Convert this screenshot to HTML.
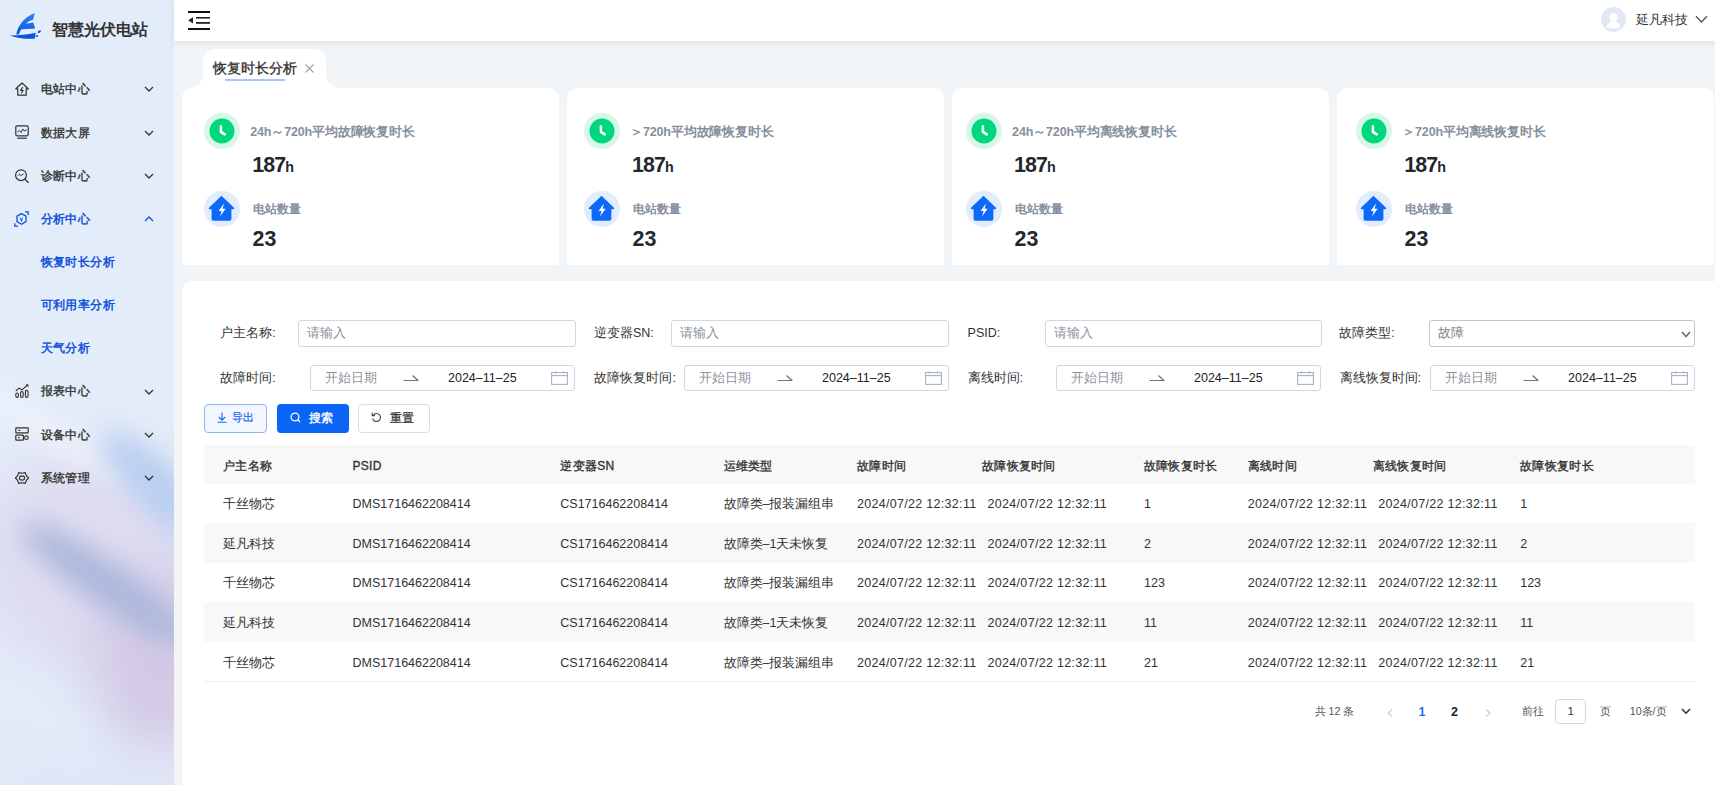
<!DOCTYPE html>
<html><head><meta charset="utf-8">
<style>
*{margin:0;padding:0;box-sizing:border-box}
html,body{width:1715px;height:785px;overflow:hidden}
body{font-family:"Liberation Sans",sans-serif;background:#f1f5f8;color:#333;position:relative}
.a{position:absolute;white-space:nowrap}
#side{position:absolute;left:0;top:0;width:174px;height:785px;background:#e3ecf9;overflow:hidden}
#side svg.bg{position:absolute;left:0;top:0}
.mi{position:absolute;left:40.7px;font-size:12px;letter-spacing:0.4px;color:#333;line-height:16px;white-space:nowrap;-webkit-text-stroke:0.35px currentColor}
.sub{color:#0c4fdc;-webkit-text-stroke:0.45px currentColor}
.chev{position:absolute;left:144px}
#hdr{position:absolute;left:174px;top:0;width:1541px;height:41px;background:#fff;box-shadow:0 2px 8px rgba(0,21,41,.09)}
#tab{position:absolute;left:202.5px;top:48.7px;width:123px;height:39.3px;background:#fff;border-radius:12px 12px 0 0}
#tab:before,#tab:after{content:"";position:absolute;bottom:0;width:13px;height:13px}
#tab:before{left:-13px;background:radial-gradient(circle at 0 0,transparent 12.5px,#fff 13px)}
#tab:after{right:-13px;background:radial-gradient(circle at 100% 0,transparent 12.5px,#fff 13px)}
.card{position:absolute;top:88px;width:377px;height:177px;background:#fff;border-radius:10px 10px 0 0}
.ico{position:absolute}
.lbl{position:absolute;font-size:12.5px;letter-spacing:-0.15px;font-weight:bold;color:#86909c;line-height:16px;white-space:nowrap}
.val{position:absolute;font-size:21.4px;font-weight:bold;color:#23272e;line-height:24px;letter-spacing:-0.9px;white-space:nowrap}
.val small{font-size:14.3px;letter-spacing:0}
#panel{position:absolute;left:182px;top:281px;width:1540px;height:520px;background:#fff;border-radius:10px}
.fl{position:absolute;font-size:12.5px;color:#333;line-height:16px;white-space:nowrap}
.inp{position:absolute;height:28px;border:1px solid #d2d7df;border-radius:3px;background:#fff}
.ph{position:absolute;font-size:12.5px;color:#8d939c;line-height:16px;white-space:nowrap}
.dt{position:absolute;font-size:12.5px;color:#222;line-height:16px;white-space:nowrap}
.btn{position:absolute;top:404.3px;height:28.3px;border-radius:4px}
.th{position:absolute;top:445px;left:204px;width:1491px;height:39px;background:#f8f8f8}
.tr{position:absolute;left:204px;width:1491px}
.tc{position:absolute;font-size:12.5px;color:#333;line-height:16px;white-space:nowrap}
.tcd{letter-spacing:0.3px}
.hc{position:absolute;font-size:12px;letter-spacing:0.3px;color:#333;line-height:16px;white-space:nowrap;-webkit-text-stroke:0.35px currentColor}
.pg{position:absolute;font-size:10.7px;color:#555;line-height:14px;white-space:nowrap}
</style></head><body>
<div id="side">
<svg class="bg" width="174" height="785" viewBox="0 0 174 785">
<defs>
<filter id="bl1" x="-100%" y="-100%" width="300%" height="300%"><feGaussianBlur stdDeviation="13"/></filter>
<filter id="bl2" x="-100%" y="-100%" width="300%" height="300%"><feGaussianBlur stdDeviation="28"/></filter>
</defs>
<rect x="0" y="0" width="174" height="785" fill="#e3ecf9"/>
<g filter="url(#bl2)"><ellipse cx="90" cy="560" rx="120" ry="110" fill="#dedcf0"/></g>
<g filter="url(#bl2)"><ellipse cx="160" cy="665" rx="70" ry="95" fill="#d3c9e5"/></g>
<g filter="url(#bl1)"><ellipse cx="40" cy="425" rx="120" ry="12" transform="rotate(30 40 425)" fill="#eef2fb"/></g>
<g filter="url(#bl1)"><ellipse cx="160" cy="490" rx="78" ry="24" transform="rotate(45 160 490)" fill="#b9cff0"/></g>
<g filter="url(#bl1)"><ellipse cx="108" cy="585" rx="104" ry="22" transform="rotate(35 108 585)" fill="#adb8dc"/></g>
<g filter="url(#bl2)"><ellipse cx="10" cy="770" rx="80" ry="70" fill="#e1ebf8"/></g>
<g filter="url(#bl2)"><ellipse cx="110" cy="800" rx="110" ry="35" fill="#dfe4f5"/></g>
</svg>
<svg class="a" style="left:8px;top:10px" width="36" height="32" viewBox="0 0 36 32">
<defs><linearGradient id="lg" x1="0" y1="0" x2="0" y2="1"><stop offset="0" stop-color="#2a86f2"/><stop offset="1" stop-color="#0a55e2"/></linearGradient></defs>
<path fill="url(#lg)" d="M26.9,3 C17.5,6.5 10.5,14 8.2,24.2 L10.9,24.6 C11.6,22.3 12.4,20.6 13.6,19.2 L27.2,18.6 L25.2,12.6 L18,13.8 C20.2,11.4 22.8,10.2 25.0,9.8 Z"/>
<path fill="#0a55e2" d="M2,25.4 C10,25.4 20,24.6 27.6,22.8 L27,28.6 C18,29.2 9,28.2 2,25.4 Z"/>
<ellipse cx="31.3" cy="21.6" rx="1.8" ry="1.1" transform="rotate(-35 31.3 21.6)" fill="#0a55e2"/>
<ellipse cx="29" cy="26" rx="1.3" ry="0.9" transform="rotate(-25 29 26)" fill="#0a55e2"/>
</svg>
<div class="a" style="left:51.5px;top:19px;font-size:16.1px;font-weight:bold;color:#333;line-height:20px">智慧光伏电站</div>
</div>
<div class="mi" style="top:81.0px">电站中心</div>
<svg class="a" style="left:15px;top:81.8px" width="14" height="14" viewBox="0 0 14 14"><path d="M7 1 L13.2 6.8 L11.2 6.8 L11.2 13.2 L2.8 13.2 L2.8 6.8 L0.8 6.8 Z" fill="none" stroke="#333" stroke-width="1.2" stroke-linejoin="round"/><path d="M7.8 5 L5.6 8.4 L8.2 8.4 L6.2 11.2" fill="none" stroke="#333" stroke-width="1.1" stroke-linejoin="round"/></svg>
<svg class="a chev" style="top:86.3px" width="10" height="6" viewBox="0 0 10 6"><path d="M1 1 L5 5 L9 1" fill="none" stroke="#333" stroke-width="1.3"/></svg>
<div class="mi" style="top:124.6px">数据大屏</div>
<svg class="a" style="left:15px;top:125.4px" width="14" height="14" viewBox="0 0 14 14"><rect x="0.8" y="0.8" width="12.4" height="10" rx="1.2" fill="none" stroke="#333" stroke-width="1.2"/><path d="M2.5 7 L4.5 5.5 L6 7.5 L8 4 L9.5 6 L11.5 5" fill="none" stroke="#333" stroke-width="1"/><path d="M2.2 13.2 H11.8" stroke="#333" stroke-width="1.2"/></svg>
<svg class="a chev" style="top:129.9px" width="10" height="6" viewBox="0 0 10 6"><path d="M1 1 L5 5 L9 1" fill="none" stroke="#333" stroke-width="1.3"/></svg>
<div class="mi" style="top:167.7px">诊断中心</div>
<svg class="a" style="left:15px;top:168.5px" width="14" height="14" viewBox="0 0 14 14"><circle cx="6" cy="6.2" r="5.4" fill="none" stroke="#333" stroke-width="1.2"/><path d="M3 6.8 L4.5 5.2 L6.2 6.6 L8.6 4.8" fill="none" stroke="#333" stroke-width="1"/><path d="M10 10.2 L13.4 13.6" stroke="#333" stroke-width="1.3" stroke-linecap="round"/></svg>
<svg class="a chev" style="top:173.0px" width="10" height="6" viewBox="0 0 10 6"><path d="M1 1 L5 5 L9 1" fill="none" stroke="#333" stroke-width="1.3"/></svg>
<div class="mi sub" style="top:210.9px">分析中心</div>
<svg class="a" style="left:14px;top:210.7px" width="16" height="16" viewBox="0 0 16 16"><path d="M7.5 2.6 L12 5.2 L12 10.6 L7.5 13.2 L3 10.6 L3 5.2 Z" fill="none" stroke="#0c4fdc" stroke-width="1.3"/><path d="M6 6.8 L7.5 8.2 L9 6.8 M7.5 8.2 V10.4 M6.3 9 H8.7" fill="none" stroke="#0c4fdc" stroke-width="1"/><path d="M11 0.8 H14.2 V4" fill="none" stroke="#0c4fdc" stroke-width="1.3"/><path d="M0.8 12.2 V15.2 H4" fill="none" stroke="#0c4fdc" stroke-width="1.3"/></svg>
<svg class="a chev" style="top:215.7px" width="10" height="6" viewBox="0 0 10 6"><path d="M1 5 L5 1 L9 5" fill="none" stroke="#0c4fdc" stroke-width="1.3"/></svg>
<div class="mi sub" style="top:254.0px">恢复时长分析</div>
<div class="mi sub" style="top:297.1px">可利用率分析</div>
<div class="mi sub" style="top:340.3px">天气分析</div>
<div class="mi" style="top:383.4px">报表中心</div>
<svg class="a" style="left:15px;top:384.2px" width="14" height="14" viewBox="0 0 14 14"><path d="M0.8 7 L4 4.2 L7 5.8 L12.6 1" fill="none" stroke="#333" stroke-width="1.1"/><path d="M11 0.8 H13 V2.8" fill="none" stroke="#333" stroke-width="1"/><rect x="0.8" y="9" width="2.6" height="4.4" rx="1.3" fill="none" stroke="#333" stroke-width="1.1"/><rect x="5.6" y="7.6" width="2.6" height="5.8" rx="1.3" fill="none" stroke="#333" stroke-width="1.1"/><rect x="10.4" y="6.4" width="2.6" height="7" rx="1.3" fill="none" stroke="#333" stroke-width="1.1"/></svg>
<svg class="a chev" style="top:388.7px" width="10" height="6" viewBox="0 0 10 6"><path d="M1 1 L5 5 L9 1" fill="none" stroke="#333" stroke-width="1.3"/></svg>
<div class="mi" style="top:426.6px">设备中心</div>
<svg class="a" style="left:15px;top:427.4px" width="14" height="14" viewBox="0 0 14 14"><rect x="0.8" y="0.8" width="12.4" height="5" rx="0.6" fill="none" stroke="#333" stroke-width="1.2"/><rect x="0.8" y="8.2" width="7.6" height="5" rx="0.6" fill="none" stroke="#333" stroke-width="1.2"/><circle cx="11.4" cy="10.7" r="1.8" fill="none" stroke="#333" stroke-width="1.1"/><path d="M3 3.3 H5.5 M3 10.7 H5" stroke="#333" stroke-width="1"/></svg>
<svg class="a chev" style="top:431.9px" width="10" height="6" viewBox="0 0 10 6"><path d="M1 1 L5 5 L9 1" fill="none" stroke="#333" stroke-width="1.3"/></svg>
<div class="mi" style="top:469.8px">系统管理</div>
<svg class="a" style="left:15px;top:470.6px" width="14" height="14" viewBox="0 0 14 14"><path d="M7.00 2.25 L10.30 1.57 L11.33 4.62 L13.60 7.00 L11.33 9.38 L10.30 12.43 L7.00 11.75 L3.70 12.43 L2.67 9.38 L0.40 7.00 L2.67 4.62 L3.70 1.57 Z" fill="none" stroke="#333" stroke-width="1.2" stroke-linejoin="round"/><ellipse cx="7" cy="7" rx="2.6" ry="2.1" fill="none" stroke="#333" stroke-width="1.1"/></svg>
<svg class="a chev" style="top:475.1px" width="10" height="6" viewBox="0 0 10 6"><path d="M1 1 L5 5 L9 1" fill="none" stroke="#333" stroke-width="1.3"/></svg>
<div id="hdr"></div>
<svg class="a" style="left:188px;top:11px" width="23" height="20" viewBox="0 0 23 20"><rect x="0" y="0" width="22" height="2" fill="#111"/><rect x="8" y="6" width="14" height="1.6" fill="#222"/><rect x="8" y="11" width="14" height="1.8" fill="#222"/><rect x="0" y="17" width="22" height="2" fill="#111"/><path d="M5 6.2 L0.2 9.3 L5 12.6 Z" fill="#222"/></svg>
<svg class="a" style="left:1601px;top:7px" width="25" height="25" viewBox="0 0 25 25"><circle cx="12.5" cy="12.5" r="12.5" fill="#e1e8f3"/><circle cx="12.5" cy="10.2" r="4.2" fill="#fff"/><path d="M5.5 20.2 C6.5 16 9 14.6 12.5 14.6 C16 14.6 18.5 16 19.5 20.2 C17 21.6 8 21.6 5.5 20.2 Z" fill="#fff"/></svg>
<div class="a" style="left:1635.5px;top:11.5px;font-size:12.8px;color:#333;line-height:16px">延凡科技</div>
<svg class="a" style="left:1695px;top:15px" width="13" height="9" viewBox="0 0 13 9"><path d="M1 1.2 L6.5 7 L12 1.2" fill="none" stroke="#555" stroke-width="1.4"/></svg>
<div id="tab"></div>
<div class="a" style="left:213px;top:58.5px;font-size:14.3px;color:#333;line-height:18px;-webkit-text-stroke:0.35px #333">恢复时长分析</div>
<svg class="a" style="left:305px;top:64px" width="9" height="9" viewBox="0 0 9 9"><path d="M0.5 0.5 L8.5 8.5 M8.5 0.5 L0.5 8.5" stroke="#9aa3b2" stroke-width="1.1"/></svg>
<div class="a" style="left:225px;top:79px;width:60px;height:2px;border-radius:1px;background:#a6c8f8"></div>
<div class="card" style="left:182px"></div>
<svg class="ico" style="left:204.2px;top:113px" width="36" height="36" viewBox="0 0 36 36"><circle cx="18" cy="18" r="18" fill="#d6f7e9"/><circle cx="18" cy="18" r="12.5" fill="#00d67b"/><path d="M16.9 13.2 V18.9 L20.8 21.4" fill="none" stroke="#fff" stroke-width="2.5" stroke-linecap="round" stroke-linejoin="round"/></svg>
<svg class="ico" style="left:204.2px;top:191px" width="36" height="36" viewBox="0 0 36 36"><circle cx="18" cy="18" r="18" fill="#e1ecfd"/><path d="M17.5 4.8 L30 16.8 C30.6 17.5 30.2 18.2 29.4 18.2 L27.4 18.2 L27.4 27.8 C27.4 29 26.6 29.8 25.4 29.8 L9.6 29.8 C8.4 29.8 7.6 29 7.6 27.8 L7.6 18.2 L5.6 18.2 C4.8 18.2 4.4 17.5 5 16.8 Z" fill="#0d6af7"/><path d="M20 12.6 L14.6 19.9 L17.6 19.9 L16 25.4 L21.6 17.7 L18.6 17.7 Z" fill="#fff"/></svg>
<div class="lbl" style="left:250.2px;top:124px">24h～720h平均故障恢复时长</div>
<div class="val" style="left:252.2px;top:153px">187<small>h</small></div>
<div class="lbl" style="left:252.6px;top:201px;font-size:12px;letter-spacing:0.3px">电站数量</div>
<div class="val" style="left:252.6px;top:227px;letter-spacing:0">23</div>
<div class="card" style="left:567px"></div>
<svg class="ico" style="left:584.1px;top:113px" width="36" height="36" viewBox="0 0 36 36"><circle cx="18" cy="18" r="18" fill="#d6f7e9"/><circle cx="18" cy="18" r="12.5" fill="#00d67b"/><path d="M16.9 13.2 V18.9 L20.8 21.4" fill="none" stroke="#fff" stroke-width="2.5" stroke-linecap="round" stroke-linejoin="round"/></svg>
<svg class="ico" style="left:584.1px;top:191px" width="36" height="36" viewBox="0 0 36 36"><circle cx="18" cy="18" r="18" fill="#e1ecfd"/><path d="M17.5 4.8 L30 16.8 C30.6 17.5 30.2 18.2 29.4 18.2 L27.4 18.2 L27.4 27.8 C27.4 29 26.6 29.8 25.4 29.8 L9.6 29.8 C8.4 29.8 7.6 29 7.6 27.8 L7.6 18.2 L5.6 18.2 C4.8 18.2 4.4 17.5 5 16.8 Z" fill="#0d6af7"/><path d="M20 12.6 L14.6 19.9 L17.6 19.9 L16 25.4 L21.6 17.7 L18.6 17.7 Z" fill="#fff"/></svg>
<div class="lbl" style="left:630.1px;top:124px">＞720h平均故障恢复时长</div>
<div class="val" style="left:632.1px;top:153px">187<small>h</small></div>
<div class="lbl" style="left:632.5px;top:201px;font-size:12px;letter-spacing:0.3px">电站数量</div>
<div class="val" style="left:632.5px;top:227px;letter-spacing:0">23</div>
<div class="card" style="left:952px"></div>
<svg class="ico" style="left:966.1px;top:113px" width="36" height="36" viewBox="0 0 36 36"><circle cx="18" cy="18" r="18" fill="#d6f7e9"/><circle cx="18" cy="18" r="12.5" fill="#00d67b"/><path d="M16.9 13.2 V18.9 L20.8 21.4" fill="none" stroke="#fff" stroke-width="2.5" stroke-linecap="round" stroke-linejoin="round"/></svg>
<svg class="ico" style="left:966.1px;top:191px" width="36" height="36" viewBox="0 0 36 36"><circle cx="18" cy="18" r="18" fill="#e1ecfd"/><path d="M17.5 4.8 L30 16.8 C30.6 17.5 30.2 18.2 29.4 18.2 L27.4 18.2 L27.4 27.8 C27.4 29 26.6 29.8 25.4 29.8 L9.6 29.8 C8.4 29.8 7.6 29 7.6 27.8 L7.6 18.2 L5.6 18.2 C4.8 18.2 4.4 17.5 5 16.8 Z" fill="#0d6af7"/><path d="M20 12.6 L14.6 19.9 L17.6 19.9 L16 25.4 L21.6 17.7 L18.6 17.7 Z" fill="#fff"/></svg>
<div class="lbl" style="left:1012.1px;top:124px">24h～720h平均离线恢复时长</div>
<div class="val" style="left:1014.1px;top:153px">187<small>h</small></div>
<div class="lbl" style="left:1014.5px;top:201px;font-size:12px;letter-spacing:0.3px">电站数量</div>
<div class="val" style="left:1014.5px;top:227px;letter-spacing:0">23</div>
<div class="card" style="left:1337px"></div>
<svg class="ico" style="left:1356.2px;top:113px" width="36" height="36" viewBox="0 0 36 36"><circle cx="18" cy="18" r="18" fill="#d6f7e9"/><circle cx="18" cy="18" r="12.5" fill="#00d67b"/><path d="M16.9 13.2 V18.9 L20.8 21.4" fill="none" stroke="#fff" stroke-width="2.5" stroke-linecap="round" stroke-linejoin="round"/></svg>
<svg class="ico" style="left:1356.2px;top:191px" width="36" height="36" viewBox="0 0 36 36"><circle cx="18" cy="18" r="18" fill="#e1ecfd"/><path d="M17.5 4.8 L30 16.8 C30.6 17.5 30.2 18.2 29.4 18.2 L27.4 18.2 L27.4 27.8 C27.4 29 26.6 29.8 25.4 29.8 L9.6 29.8 C8.4 29.8 7.6 29 7.6 27.8 L7.6 18.2 L5.6 18.2 C4.8 18.2 4.4 17.5 5 16.8 Z" fill="#0d6af7"/><path d="M20 12.6 L14.6 19.9 L17.6 19.9 L16 25.4 L21.6 17.7 L18.6 17.7 Z" fill="#fff"/></svg>
<div class="lbl" style="left:1402.2px;top:124px">＞720h平均离线恢复时长</div>
<div class="val" style="left:1404.2px;top:153px">187<small>h</small></div>
<div class="lbl" style="left:1404.6px;top:201px;font-size:12px;letter-spacing:0.3px">电站数量</div>
<div class="val" style="left:1404.6px;top:227px;letter-spacing:0">23</div>
<div id="panel"></div>
<div class="fl" style="left:220.2px;top:324.7px">户主名称:</div>
<div class="inp" style="left:298.3px;top:319.5px;width:277.5px;height:27.3px"></div>
<div class="ph" style="left:307.3px;top:324.7px">请输入</div>
<div class="fl" style="left:594px;top:324.7px">逆变器SN:</div>
<div class="inp" style="left:671.3px;top:319.5px;width:277.5px;height:27.3px"></div>
<div class="ph" style="left:680.3px;top:324.7px">请输入</div>
<div class="fl" style="left:967.6px;top:324.7px">PSID:</div>
<div class="inp" style="left:1044.5px;top:319.5px;width:277.5px;height:27.3px"></div>
<div class="ph" style="left:1053.5px;top:324.7px">请输入</div>
<div class="fl" style="left:1339.3px;top:324.7px">故障类型:</div>
<div class="inp" style="left:1428.6px;top:319.5px;width:266.3px;height:27.3px;border-color:#c6c6c6"></div>
<div class="ph" style="left:1437.6px;top:324.7px;color:#7a7f87">故障</div>
<svg class="a" style="left:1681px;top:330.5px" width="10" height="7" viewBox="0 0 10 7"><path d="M1 1 L5 5.5 L9 1" fill="none" stroke="#6b7280" stroke-width="1.8"/></svg>
<div class="fl" style="left:220.2px;top:370px">故障时间:</div>
<div class="inp" style="left:309.5px;top:364.7px;width:265.3px;height:26.7px"></div>
<div class="ph" style="left:325.0px;top:370px">开始日期</div>
<svg class="a" style="left:403.0px;top:374px" width="16" height="8" viewBox="0 0 16 8"><path d="M0.5 6.5 H15 L9.5 1.5" fill="none" stroke="#6b7280" stroke-width="1.2" stroke-linejoin="round"/></svg>
<div class="dt" style="left:448.0px;top:370px">2024–11–25</div>
<svg class="a" style="left:551.0px;top:371px" width="17" height="14" viewBox="0 0 17 14"><rect x="0.6" y="1.6" width="15.8" height="11.8" fill="none" stroke="#a7b3c6" stroke-width="1.1"/><path d="M0.6 4.6 H16.4" stroke="#a7b3c6" stroke-width="1.1"/><path d="M4.5 0.2 V2.6 M12.5 0.2 V2.6" stroke="#a7b3c6" stroke-width="1"/></svg>
<div class="fl" style="left:594.4px;top:370px">故障恢复时间:</div>
<div class="inp" style="left:683.5px;top:364.7px;width:265.3px;height:26.7px"></div>
<div class="ph" style="left:699.0px;top:370px">开始日期</div>
<svg class="a" style="left:777.0px;top:374px" width="16" height="8" viewBox="0 0 16 8"><path d="M0.5 6.5 H15 L9.5 1.5" fill="none" stroke="#6b7280" stroke-width="1.2" stroke-linejoin="round"/></svg>
<div class="dt" style="left:822.0px;top:370px">2024–11–25</div>
<svg class="a" style="left:925.0px;top:371px" width="17" height="14" viewBox="0 0 17 14"><rect x="0.6" y="1.6" width="15.8" height="11.8" fill="none" stroke="#a7b3c6" stroke-width="1.1"/><path d="M0.6 4.6 H16.4" stroke="#a7b3c6" stroke-width="1.1"/><path d="M4.5 0.2 V2.6 M12.5 0.2 V2.6" stroke="#a7b3c6" stroke-width="1"/></svg>
<div class="fl" style="left:967.6px;top:370px">离线时间:</div>
<div class="inp" style="left:1055.5px;top:364.7px;width:265.3px;height:26.7px"></div>
<div class="ph" style="left:1071.0px;top:370px">开始日期</div>
<svg class="a" style="left:1149.0px;top:374px" width="16" height="8" viewBox="0 0 16 8"><path d="M0.5 6.5 H15 L9.5 1.5" fill="none" stroke="#6b7280" stroke-width="1.2" stroke-linejoin="round"/></svg>
<div class="dt" style="left:1194.0px;top:370px">2024–11–25</div>
<svg class="a" style="left:1297.0px;top:371px" width="17" height="14" viewBox="0 0 17 14"><rect x="0.6" y="1.6" width="15.8" height="11.8" fill="none" stroke="#a7b3c6" stroke-width="1.1"/><path d="M0.6 4.6 H16.4" stroke="#a7b3c6" stroke-width="1.1"/><path d="M4.5 0.2 V2.6 M12.5 0.2 V2.6" stroke="#a7b3c6" stroke-width="1"/></svg>
<div class="fl" style="left:1339.6px;top:370px">离线恢复时间:</div>
<div class="inp" style="left:1429.6px;top:364.7px;width:265.3px;height:26.7px"></div>
<div class="ph" style="left:1445.1px;top:370px">开始日期</div>
<svg class="a" style="left:1523.1px;top:374px" width="16" height="8" viewBox="0 0 16 8"><path d="M0.5 6.5 H15 L9.5 1.5" fill="none" stroke="#6b7280" stroke-width="1.2" stroke-linejoin="round"/></svg>
<div class="dt" style="left:1568.1px;top:370px">2024–11–25</div>
<svg class="a" style="left:1671.1px;top:371px" width="17" height="14" viewBox="0 0 17 14"><rect x="0.6" y="1.6" width="15.8" height="11.8" fill="none" stroke="#a7b3c6" stroke-width="1.1"/><path d="M0.6 4.6 H16.4" stroke="#a7b3c6" stroke-width="1.1"/><path d="M4.5 0.2 V2.6 M12.5 0.2 V2.6" stroke="#a7b3c6" stroke-width="1"/></svg>
<div class="btn" style="left:204.3px;width:62.3px;border:1px solid #8fb5f6;background:#f2f7ff"></div>
<svg class="a" style="left:217px;top:412px" width="10" height="11" viewBox="0 0 10 11"><path d="M5 0.5 V8 M1.8 5 L5 8.2 L8.2 5 M0.5 10.3 H9.5" fill="none" stroke="#1767e8" stroke-width="1.1"/></svg>
<div class="a" style="left:231.5px;top:409px;font-size:10.7px;color:#1767e8;line-height:16px;-webkit-text-stroke:0.2px currentColor">导出</div>
<div class="btn" style="left:277px;width:72px;background:#0a64f5"></div>
<svg class="a" style="left:289.5px;top:412px" width="11" height="11" viewBox="0 0 11 11"><circle cx="5" cy="5" r="3.9" fill="none" stroke="#fff" stroke-width="1.3"/><path d="M7.8 7.8 L10 10" stroke="#fff" stroke-width="1.3"/></svg>
<div class="a" style="left:308.5px;top:410px;font-size:12px;letter-spacing:0.4px;color:#fff;line-height:17px;-webkit-text-stroke:0.35px currentColor">搜索</div>
<div class="btn" style="left:358.2px;width:71.4px;border:1px solid #d9dce3;background:#fff"></div>
<svg class="a" style="left:370.5px;top:412px" width="11" height="11" viewBox="0 0 11 11"><path d="M2.2 3.2 A4 4 0 1 1 1.6 6.5" fill="none" stroke="#444" stroke-width="1.1"/><path d="M1.2 0.8 V3.6 H4" fill="none" stroke="#444" stroke-width="1.1"/></svg>
<div class="a" style="left:389.7px;top:410px;font-size:12px;letter-spacing:0.4px;color:#333;line-height:17px;-webkit-text-stroke:0.25px currentColor">重置</div>
<div class="th"></div>
<div class="hc" style="left:223px;top:457.5px">户主名称</div>
<div class="hc" style="left:352.5px;top:457.5px">PSID</div>
<div class="hc" style="left:560.3px;top:457.5px">逆变器SN</div>
<div class="hc" style="left:723.5px;top:457.5px">运维类型</div>
<div class="hc" style="left:857px;top:457.5px">故障时间</div>
<div class="hc" style="left:982px;top:457.5px">故障恢复时间</div>
<div class="hc" style="left:1143.8px;top:457.5px">故障恢复时长</div>
<div class="hc" style="left:1247.7px;top:457.5px">离线时间</div>
<div class="hc" style="left:1372.9px;top:457.5px">离线恢复时间</div>
<div class="hc" style="left:1520.2px;top:457.5px">故障恢复时长</div>
<div class="tr" style="top:484.00px;height:38.85px;background:#fff"></div>
<div class="tc" style="left:223px;top:495.65px">千丝物芯</div>
<div class="tc" style="left:352.5px;top:495.65px">DMS1716462208414</div>
<div class="tc" style="left:560.3px;top:495.65px">CS1716462208414</div>
<div class="tc" style="left:723.5px;top:495.65px">故障类–报装漏组串</div>
<div class="tc tcd" style="left:857px;top:495.65px">2024/07/22 12:32:11</div>
<div class="tc tcd" style="left:987.6px;top:495.65px">2024/07/22 12:32:11</div>
<div class="tc" style="left:1144px;top:495.65px">1</div>
<div class="tc tcd" style="left:1247.7px;top:495.65px">2024/07/22 12:32:11</div>
<div class="tc tcd" style="left:1378.2px;top:495.65px">2024/07/22 12:32:11</div>
<div class="tc" style="left:1520.2px;top:495.65px">1</div>
<div class="tr" style="top:522.85px;height:40.35px;background:#f8f8f8"></div>
<div class="tc" style="left:223px;top:536.20px">延凡科技</div>
<div class="tc" style="left:352.5px;top:536.20px">DMS1716462208414</div>
<div class="tc" style="left:560.3px;top:536.20px">CS1716462208414</div>
<div class="tc" style="left:723.5px;top:536.20px">故障类–1天未恢复</div>
<div class="tc tcd" style="left:857px;top:536.20px">2024/07/22 12:32:11</div>
<div class="tc tcd" style="left:987.6px;top:536.20px">2024/07/22 12:32:11</div>
<div class="tc" style="left:1144px;top:536.20px">2</div>
<div class="tc tcd" style="left:1247.7px;top:536.20px">2024/07/22 12:32:11</div>
<div class="tc tcd" style="left:1378.2px;top:536.20px">2024/07/22 12:32:11</div>
<div class="tc" style="left:1520.2px;top:536.20px">2</div>
<div class="tr" style="top:563.20px;height:38.70px;background:#fff"></div>
<div class="tc" style="left:223px;top:574.70px">千丝物芯</div>
<div class="tc" style="left:352.5px;top:574.70px">DMS1716462208414</div>
<div class="tc" style="left:560.3px;top:574.70px">CS1716462208414</div>
<div class="tc" style="left:723.5px;top:574.70px">故障类–报装漏组串</div>
<div class="tc tcd" style="left:857px;top:574.70px">2024/07/22 12:32:11</div>
<div class="tc tcd" style="left:987.6px;top:574.70px">2024/07/22 12:32:11</div>
<div class="tc" style="left:1144px;top:574.70px">123</div>
<div class="tc tcd" style="left:1247.7px;top:574.70px">2024/07/22 12:32:11</div>
<div class="tc tcd" style="left:1378.2px;top:574.70px">2024/07/22 12:32:11</div>
<div class="tc" style="left:1520.2px;top:574.70px">123</div>
<div class="tr" style="top:601.90px;height:40.10px;background:#f8f8f8"></div>
<div class="tc" style="left:223px;top:615.20px">延凡科技</div>
<div class="tc" style="left:352.5px;top:615.20px">DMS1716462208414</div>
<div class="tc" style="left:560.3px;top:615.20px">CS1716462208414</div>
<div class="tc" style="left:723.5px;top:615.20px">故障类–1天未恢复</div>
<div class="tc tcd" style="left:857px;top:615.20px">2024/07/22 12:32:11</div>
<div class="tc tcd" style="left:987.6px;top:615.20px">2024/07/22 12:32:11</div>
<div class="tc" style="left:1144px;top:615.20px">11</div>
<div class="tc tcd" style="left:1247.7px;top:615.20px">2024/07/22 12:32:11</div>
<div class="tc tcd" style="left:1378.2px;top:615.20px">2024/07/22 12:32:11</div>
<div class="tc" style="left:1520.2px;top:615.20px">11</div>
<div class="tr" style="top:642.00px;height:39.00px;background:#fff"></div>
<div class="tc" style="left:223px;top:655.00px">千丝物芯</div>
<div class="tc" style="left:352.5px;top:655.00px">DMS1716462208414</div>
<div class="tc" style="left:560.3px;top:655.00px">CS1716462208414</div>
<div class="tc" style="left:723.5px;top:655.00px">故障类–报装漏组串</div>
<div class="tc tcd" style="left:857px;top:655.00px">2024/07/22 12:32:11</div>
<div class="tc tcd" style="left:987.6px;top:655.00px">2024/07/22 12:32:11</div>
<div class="tc" style="left:1144px;top:655.00px">21</div>
<div class="tc tcd" style="left:1247.7px;top:655.00px">2024/07/22 12:32:11</div>
<div class="tc tcd" style="left:1378.2px;top:655.00px">2024/07/22 12:32:11</div>
<div class="tc" style="left:1520.2px;top:655.00px">21</div>
<div class="a" style="left:204px;top:680.5px;width:1491px;height:1px;background:#ebeef5"></div>
<div class="pg" style="left:1314.6px;top:704px">共 12 条</div>
<svg class="a" style="left:1386.5px;top:708.5px" width="6" height="8" viewBox="0 0 6 8"><path d="M5 0.5 L1 4 L5 7.5" fill="none" stroke="#a8b0bd" stroke-width="1"/></svg>
<div class="pg" style="left:1418.5px;top:705px;font-weight:bold;color:#1a73f5;font-size:12.5px">1</div>
<div class="pg" style="left:1451px;top:705px;font-weight:bold;color:#222;font-size:12.5px">2</div>
<svg class="a" style="left:1484.5px;top:708.5px" width="6" height="8" viewBox="0 0 6 8"><path d="M1 0.5 L5 4 L1 7.5" fill="none" stroke="#a8b0bd" stroke-width="1"/></svg>
<div class="pg" style="left:1521.9px;top:704px">前往</div>
<div class="a" style="left:1555.4px;top:699.4px;width:31.1px;height:24.2px;border:1px solid #d3d8e0;border-radius:4px;background:#fff"></div>
<div class="pg" style="left:1567.5px;top:704px;color:#333;font-size:11.5px">1</div>
<div class="pg" style="left:1600px;top:704px">页</div>
<div class="pg" style="left:1629.7px;top:704px">10条/页</div>
<svg class="a" style="left:1681px;top:708px" width="10" height="7" viewBox="0 0 10 7"><path d="M1 1 L5 5.2 L9 1" fill="none" stroke="#333" stroke-width="1.6"/></svg>
</body></html>
